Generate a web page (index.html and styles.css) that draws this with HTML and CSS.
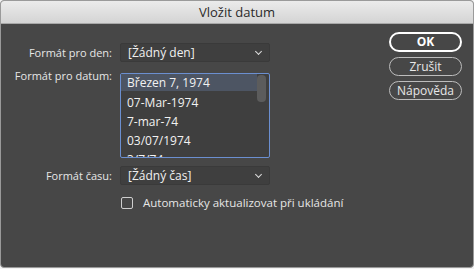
FILE: index.html
```html
<!DOCTYPE html>
<html lang="cs">
<head>
    <meta charset="UTF-8">
    <title>Vložit datum</title>
    <link rel="stylesheet" href="styles.css">
</head>
<body>
    <div class="dialog">
        <div class="titlebar">Vložit datum</div>
        <div class="content">
            <div class="form">
                <div class="row">
                    <label class="label">Formát pro den:</label>
                    <div class="select"><span>[Žádný den]</span><span class="chevron"></span></div>
                </div>
                <div class="row row-top">
                    <label class="label">Formát pro datum:</label>
                    <div class="listbox">
                        <div class="list">
                            <div class="item selected">Březen 7, 1974</div>
                            <div class="item">07-Mar-1974</div>
                            <div class="item">7-mar-74</div>
                            <div class="item">03/07/1974</div>
                            <div class="item">3/7/74</div>
                        </div>
                        <div class="scrollbar"><div class="thumb"></div></div>
                    </div>
                </div>
                <div class="row row-time">
                    <label class="label">Formát času:</label>
                    <div class="select"><span>[Žádný čas]</span><span class="chevron"></span></div>
                </div>
                <div class="row">
                    <span class="label"></span>
                    <label class="check"><span class="box"></span>Automaticky aktualizovat při ukládání</label>
                </div>
            </div>
            <div class="buttons">
                <button class="btn btn-default">OK</button>
                <button class="btn">Zrušit</button>
                <button class="btn">Nápověda</button>
            </div>
        </div>
    </div>
</body>
</html>
```

FILE: styles.css
```css
body {
    margin: 0;
    background: #f2f2f2;
    font-family: "Open Sans", "Liberation Sans", sans-serif;
    font-size: 11px;
    color: #e6e6e6;
}
.dialog {
    width: 472px;
    height: 266px;
    border: 1px solid #9a9a9a;
    border-radius: 4px;
    overflow: hidden;
    background: #474747;
}
.titlebar {
    height: 22px;
    line-height: 22px;
    text-align: center;
    font-size: 13px;
    color: #2a2a2a;
    background: linear-gradient(#ebebeb, #d4d4d4);
    border-bottom: 1px solid #a8a8a8;
}
.content {
    display: flex;
    justify-content: space-between;
    padding: 8px 11px 0 0;
}
.form {
    display: flex;
    flex-direction: column;
    padding-top: 11px;
}
.row {
    display: flex;
    align-items: center;
    gap: 8px;
}
.row-top {
    align-items: flex-start;
    margin-top: 11px;
}
.row-time {
    margin-top: 8px;
    margin-bottom: 10px;
}
.label {
    width: 111px;
    text-align: right;
    white-space: nowrap;
}
.row-top .label {
    margin-top: -5px;
}
.select {
    width: 150px;
    height: 19px;
    box-sizing: border-box;
    display: flex;
    align-items: center;
    justify-content: space-between;
    padding: 0 8px 0 7px;
    background: #3f3f3f;
    border: 1px solid #3a3a3a;
    border-radius: 2px;
    font-size: 12px;
    color: #f0f0f0;
}
.chevron {
    width: 4px;
    height: 4px;
    border-right: 1.3px solid #ddd;
    border-bottom: 1.3px solid #ddd;
    transform: rotate(45deg);
    margin-top: -3px;
}
.listbox {
    width: 150px;
    height: 85px;
    box-sizing: border-box;
    border: 1px solid #6b8fd0;
    border-radius: 2px;
    background: #3f3f3f;
    display: flex;
    overflow: hidden;
}
.list {
    flex: 1;
    padding-top: 1px;
}
.item {
    height: 19px;
    line-height: 19px;
    padding-left: 6px;
    font-size: 12px;
    color: #f2f2f2;
    white-space: nowrap;
}
.item.selected {
    height: 16px;
    line-height: 16px;
    margin-top: -1px;
    margin-bottom: 2px;
    padding-top: 1px;
    background: #4d5563;
}
.scrollbar {
    width: 11px;
    padding: 1px 1px 0 0;
}
.thumb {
    width: 9px;
    height: 27px;
    border-radius: 4px;
    background: #5c5c5c;
}
.check {
    display: flex;
    align-items: center;
    gap: 10px;
    font-size: 11.5px;
    margin-left: 1px;
}
.box {
    width: 10px;
    height: 10px;
    border: 1.5px solid #cfcfcf;
    border-radius: 2px;
}
.buttons {
    display: flex;
    flex-direction: column;
    gap: 5px;
}
.btn {
    width: 73px;
    height: 19px;
    box-sizing: border-box;
    border: 1px solid #bdbdbd;
    border-radius: 10px;
    background: #474747;
    color: #e8e8e8;
    font-family: inherit;
    font-size: 12px;
    padding: 0;
    line-height: 16px;
}
.btn-default {
    height: 20px;
    border: 2px solid #fff;
    color: #fff;
    font-weight: bold;
}
```
